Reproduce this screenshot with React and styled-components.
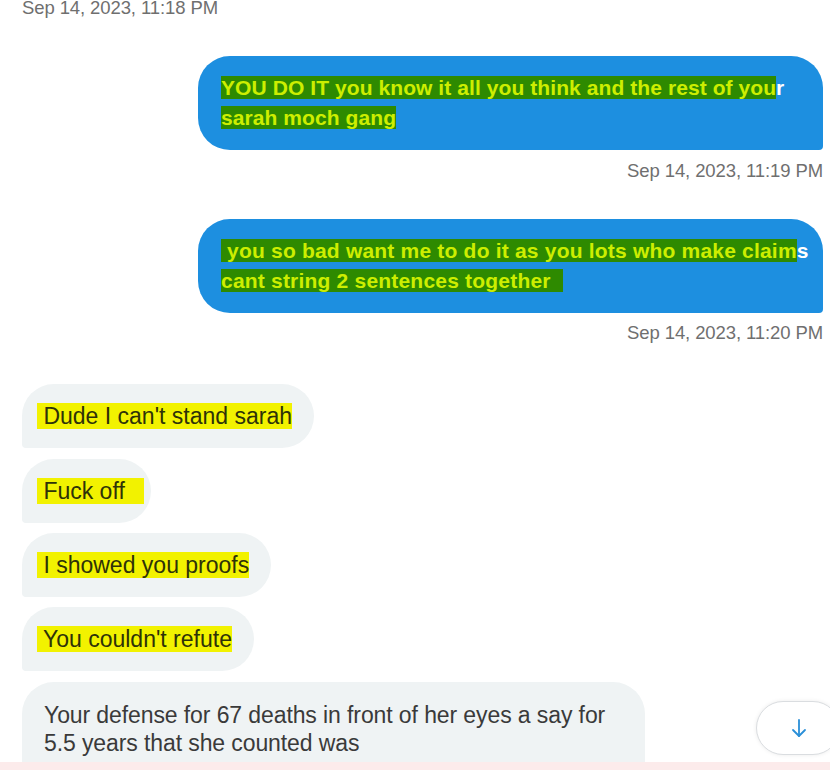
import React from "react";
import styled, { createGlobalStyle } from "styled-components";

const Global = createGlobalStyle`
  html, body { margin: 0; padding: 0; background: #ffffff; }
  body { font-family: "Liberation Sans", Arial, sans-serif; }
`;

const Page = styled.div`
  width: 830px;
  height: 770px;
  display: flex;
  flex-direction: column;
  position: relative;
  overflow: hidden;
  background: #ffffff;
`;

const Thread = styled.div`
  height: 762px;
  overflow: hidden;
  display: flex;
  flex-direction: column;
  padding: 0 7px 0 22px;
  box-sizing: border-box;
`;

const Stamp = styled.div`
  font-size: 18.5px;
  line-height: 20px;
  color: #6f6f6f;
  letter-spacing: -0.1px;
  white-space: nowrap;
  text-align: ${(p) => (p.$right ? "right" : "left")};
  margin-top: ${(p) => p.$mt || 0}px;
`;

const Sent = styled.div`
  align-self: flex-end;
  width: 625px;
  box-sizing: border-box;
  margin-top: ${(p) => p.$mt}px;
  background: #1d8fe0;
  border-radius: 32px 32px 4px 32px;
  padding: 17px 10px 17px 23px;
  font-size: 21px;
  line-height: 30px;
  font-weight: 700;
  letter-spacing: ${(p) => p.$ls || 0}px;
  color: #ffffff;
  white-space: nowrap;
`;

const GreenMark = styled.span`
  background: #2e8a00;
  color: #cdee00;
  white-space: pre;
`;

const Received = styled.div`
  align-self: flex-start;
  margin-top: ${(p) => p.$mt}px;
  background: #eff3f4;
  border-radius: 32px 32px 32px 4px;
  padding: 18px ${(p) => p.$pr || 22}px 18px 15px;
  font-size: 23px;
  line-height: 28px;
  color: #2e3208;
  white-space: nowrap;
`;

const YellowMark = styled.span`
  background: #f2f200;
  white-space: pre;
`;

const Plain = styled.div`
  align-self: flex-start;
  width: 623px;
  box-sizing: border-box;
  margin-top: 11px;
  background: #eff3f4;
  border-radius: 32px 32px 32px 4px;
  padding: 19px 10px 40px 22px;
  font-size: 23px;
  line-height: 28px;
  color: #3a3a3a;
  letter-spacing: -0.1px;
  white-space: nowrap;
`;

const Strip = styled.div`
  height: 8px;
  background: #fcebeb;
`;

const ScrollBtn = styled.button`
  position: absolute;
  left: 756px;
  top: 701px;
  width: 84px;
  height: 54px;
  border-radius: 27px;
  border: 1px solid #dadde0;
  background: #ffffff;
  box-shadow: 0 0 4px rgba(0, 0, 0, 0.08);
  display: flex;
  align-items: center;
  justify-content: flex-start;
  padding: 0 0 0 33px;
  box-sizing: border-box;
  cursor: pointer;
`;

const ArrowDown = () => (
  <svg width="18" height="20" viewBox="0 0 18 20" fill="none" stroke="#2a8fd8" strokeWidth="1.8" strokeLinecap="round" strokeLinejoin="round">
    <path d="M9 2v16" />
    <path d="M3 12l6 6 6-6" />
  </svg>
);

export default function App() {
  return (
    <>
      <Global />
      <Page>
        <Thread>
          <Stamp $mt={-2}>Sep 14, 2023, 11:18 PM</Stamp>
          <Sent $mt={38} $ls={0.08}>
            <GreenMark>YOU DO IT you know it all you think and the rest of you</GreenMark>r
            <br />
            <GreenMark>sarah moch gang</GreenMark>
          </Sent>
          <Stamp $right $mt={11}>Sep 14, 2023, 11:19 PM</Stamp>
          <Sent $mt={38} $ls={0.2}>
            <GreenMark> you so bad want me to do it as you lots who make claim</GreenMark>s
            <br />
            <GreenMark>cant string 2 sentences together  </GreenMark>
          </Sent>
          <Stamp $right $mt={10}>Sep 14, 2023, 11:20 PM</Stamp>
          <Received $mt={41}>
            <YellowMark> Dude I can't stand sarah</YellowMark>
          </Received>
          <Received $mt={11} $pr={7}>
            <YellowMark> Fuck off   </YellowMark>
          </Received>
          <Received $mt={10}>
            <YellowMark> I showed you proofs</YellowMark>
          </Received>
          <Received $mt={10}>
            <YellowMark> You couldn't refute</YellowMark>
          </Received>
          <Plain>
            Your defense for 67 deaths in front of her eyes a say for
            <br />
            5.5 years that she counted was
          </Plain>
        </Thread>
        <Strip />
        <ScrollBtn aria-label="Scroll to bottom">
          <ArrowDown />
        </ScrollBtn>
      </Page>
    </>
  );
}
